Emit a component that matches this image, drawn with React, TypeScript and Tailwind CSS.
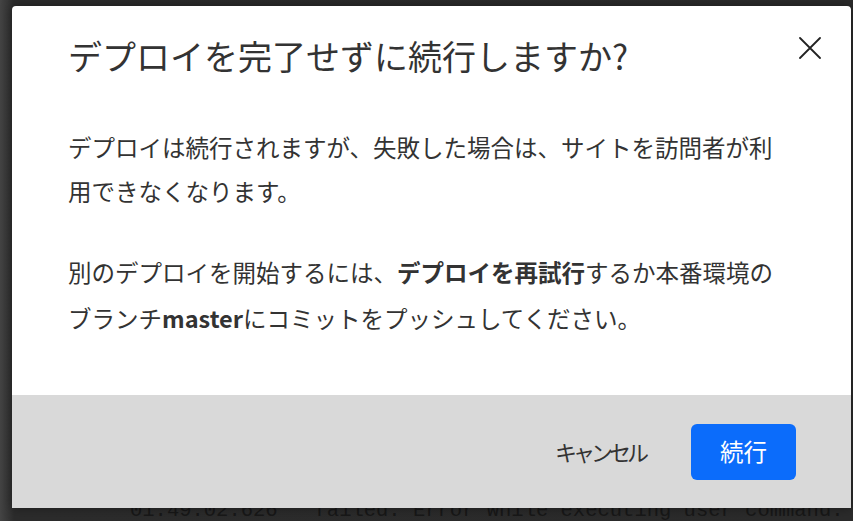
const jp = { fontFamily: '"Noto Sans CJK JP", "Noto Sans", sans-serif' };

const ConfirmDialog = () => {
    return <div className="absolute left-[12px] top-[6px] w-[839px] h-[502px] bg-white rounded-t-[4px] flex flex-col shadow-[0_0_12px_rgba(0,0,0,0.4)]" style={jp}>
        {/* Header */}
        <div className="flex items-start justify-between pl-[56px] pr-[30px] pt-[28px]">
            <h2 className="text-[34px] leading-[44px] text-[#333333] font-normal">
                デプロイを完了せずに続行しますか?
            </h2>
            <button className="mt-[3px] text-[#222222]">
                <svg className="w-[22px] h-[22px]" viewBox="0 0 22 22" fill="none" stroke="currentColor" strokeWidth={1.8} strokeLinecap="round">
                    <path d="M1 1L21 21M21 1L1 21" />
                </svg>
            </button>
        </div>

        {/* Body */}
        <div className="flex-1 pl-[56px] pr-[66px] pt-[47px] text-[23.5px] leading-[44px] text-[#333333]">
            <p className="mb-[36px]">
                デプロイは続行されますが、失敗した場合は、サイトを訪問者が利用できなくなります。
            </p>
            <p className="leading-[46px]">
                別のデプロイを開始するには、<span className="font-bold">デプロイを再試行</span>するか本番環境のブランチ<span className="font-bold">master</span>にコミットをプッシュしてください。
            </p>
        </div>

        {/* Footer */}
        <div className="h-[113px] bg-[#d9d9d9] flex items-center justify-end gap-[22px] pr-[55px]">
            <button className="h-[56px] px-[24px] text-[22px] tracking-[-4px] text-[#333333] rounded-[6px]">
                キャンセル
            </button>
            <button className="h-[56px] w-[105px] text-[23.5px] text-white bg-[#0b6cfb] rounded-[6px]">
                続行
            </button>
        </div>
    </div>
}

export default function App() {
    return <div className="relative w-[853px] h-[521px] overflow-hidden bg-[linear-gradient(90deg,#444444_0px,#2c2c2c_14px,#2b2b2b_100%)]">
        {/* page behind the modal */}
        <div className="pt-[501px] pl-[130px] text-[20.5px] leading-none text-[#181818] whitespace-pre" style={{ fontFamily: '"Liberation Mono", monospace' }}>
            01:49:02.626   failed: Error while executing user command.
        </div>
        <ConfirmDialog />
    </div>
}
